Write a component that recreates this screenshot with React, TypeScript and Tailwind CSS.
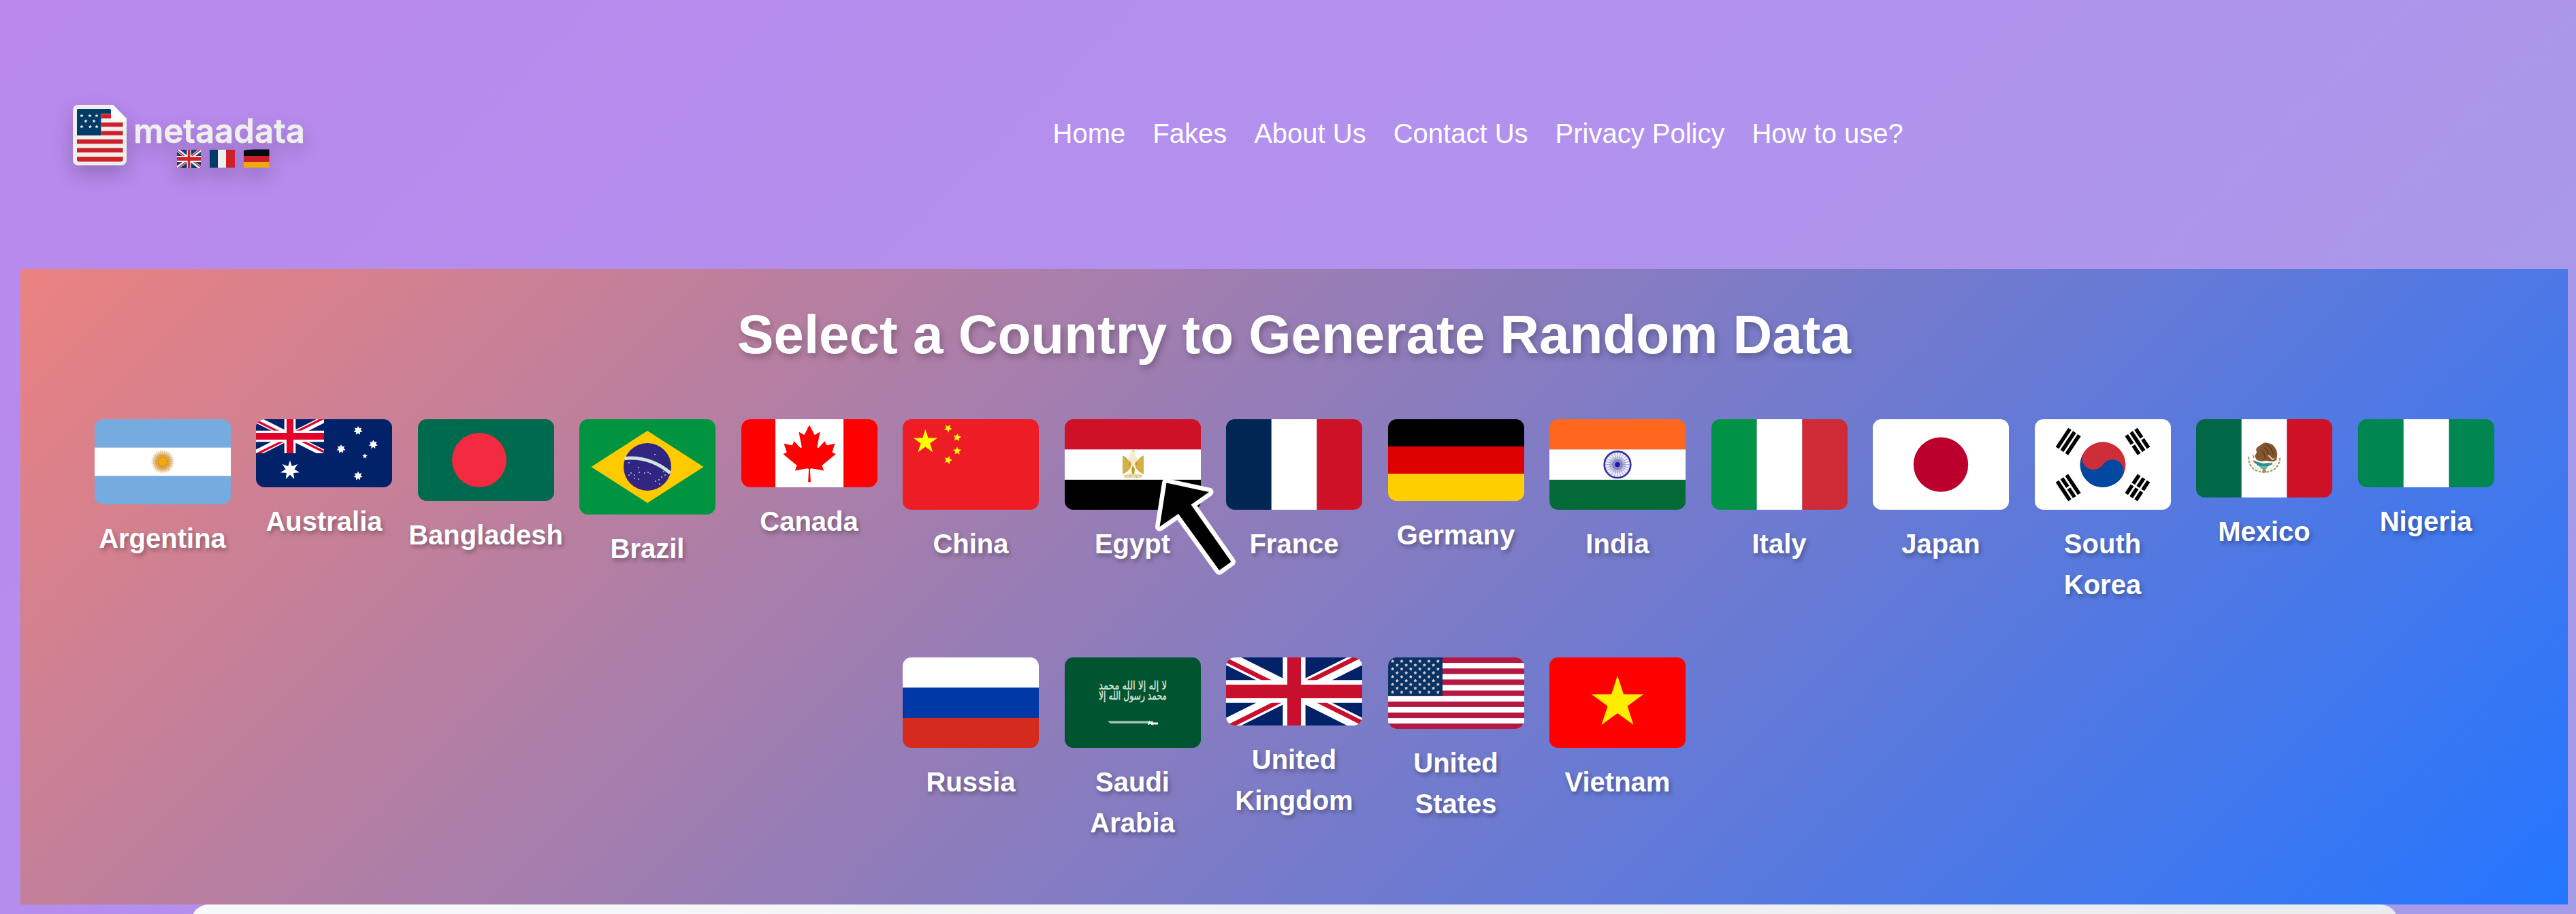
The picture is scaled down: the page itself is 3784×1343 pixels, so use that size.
import { useId, type ReactNode } from "react";

function star(cx: number, cy: number, r: number, points = 5, inner = 0.382, turn = 0) {
  const out: string[] = [];
  for (let i = 0; i < points * 2; i++) {
    const rad = i % 2 === 0 ? r : r * inner;
    const a = (Math.PI * i) / points - Math.PI / 2 + turn;
    out.push(`${(cx + rad * Math.cos(a)).toFixed(3)},${(cy + rad * Math.sin(a)).toFixed(3)}`);
  }
  return out.join(" ");
}

function Bands({ colors, h, vertical }: { colors: string[]; h: number; vertical?: boolean }) {
  const n = colors.length;
  return (
    <>
      {colors.map((c, i) =>
        vertical ? (
          <rect key={i} x={(200 / n) * i} y={0} width={200 / n + 0.2} height={h} fill={c} />
        ) : (
          <rect key={i} x={0} y={(h / n) * i} width={200} height={h / n + 0.2} fill={c} />
        ),
      )}
    </>
  );
}

function UnionJack({ blue = "#012169", red = "#c8102e" }: { blue?: string; red?: string }) {
  const id = useId();
  return (
    <g>
      <clipPath id={id}>
        <path d="M30,15h30v15zv15H0zH0V0zV0h30z" />
      </clipPath>
      <path d="M0,0v30h60V0z" fill={blue} />
      <path d="M0,0 60,30M60,0 0,30" stroke="#fff" strokeWidth="6" />
      <path d="M0,0 60,30M60,0 0,30" clipPath={`url(#${id})`} stroke={red} strokeWidth="4" />
      <path d="M30,0v30M0,15h60" stroke="#fff" strokeWidth="10" />
      <path d="M30,0v30M0,15h60" stroke={red} strokeWidth="6" />
    </g>
  );
}

const argentina = (
  <>
    <Bands h={125} colors={["#74acdf", "#ffffff", "#74acdf"]} />
    <polygon points={star(100, 62.5, 18, 32, 0.75)} fill="#e6c797" />
    <circle cx="100" cy="62.5" r="11.5" fill="#dda650" />
    <circle cx="100" cy="62.5" r="7" fill="#f0a80c" stroke="#c98a1c" strokeWidth="1" />
  </>
);

const australia = (
  <>
    <rect width="200" height="100" fill="#012169" />
    <svg width="100" height="50" viewBox="0 0 60 30">
      <UnionJack red="#e4002b" />
    </svg>
    <g fill="#fff">
      <polygon points={star(50, 75, 14.5, 7, 0.45)} />
      <polygon points={star(150, 83.3, 6.8, 7, 0.55)} />
      <polygon points={star(125, 43.7, 6.8, 7, 0.55)} />
      <polygon points={star(150, 16.7, 6.8, 7, 0.55)} />
      <polygon points={star(172.3, 37, 6.8, 7, 0.55)} />
      <polygon points={star(160, 54.2, 4, 5, 0.45)} />
    </g>
  </>
);

const brazil = (
  <>
    <rect width="200" height="140" fill="#009440" />
    <path d="M17.5 70 100 17 182.5 70 100 123z" fill="#ffcb00" />
    <circle cx="100" cy="70" r="35" fill="#302681" />
    <path d="M66.5 57.5Q104 54 133.5 79" fill="none" stroke="#cfe6dc" strokeWidth="5" />
    <g fill="#b9b6dc">
      {[
        [73, 64], [87, 71], [76, 79], [73, 82], [81, 82], [88, 78], [87, 88], [101, 78],
        [81, 87], [124, 77], [121, 85], [126, 82], [112, 91], [117, 89], [118, 95], [111, 52], [104, 80], [96, 79],
      ].map(([x, y]) => (
        <circle key={`${x}-${y}`} cx={x} cy={y} r="1.1" />
      ))}
    </g>
  </>
);

const canada = (
  <>
    <rect width="200" height="100" fill="#fff" />
    <path d="M0 0h50v100H0zM150 0h50v100h-50z" fill="#ff0000" />
    <path
      transform="translate(100 50) scale(0.0208333)"
      fill="#ff0000"
      d="m-90 2030 45-863a95 95 0 0 0-111-98l-859 151 116-320a65 65 0 0 0-20-73l-941-762 212-99a65 65 0 0 0 34-79l-186-572 542 115a65 65 0 0 0 73-38l105-247 423 454a65 65 0 0 0 111-57l-204-1052 327 189a65 65 0 0 0 91-27l332-652 332 652a65 65 0 0 0 91 27l327-189-204 1052a65 65 0 0 0 111 57l423-454 105 247a65 65 0 0 0 73 38l542-115-186 572a65 65 0 0 0 34 79l212 99-941 762a65 65 0 0 0-20 73l116 320-859-151a95 95 0 0 0-111 98l45 863z"
    />
  </>
);

const china = (
  <>
    <rect width="200" height="134" fill="#ee1c25" />
    <g fill="#ffff00" transform="scale(6.6667)">
      <polygon points={star(5, 5, 2.8)} />
      <polygon points={star(10, 2, 0.95, 5, 0.45, 0.55)} />
      <polygon points={star(12, 4, 0.95, 5, 0.45, 0.15)} />
      <polygon points={star(12, 7, 0.95, 5, 0.45)} />
      <polygon points={star(10, 9, 0.95, 5, 0.45, 0.3)} />
    </g>
  </>
);

const egypt = (
  <>
    <Bands h={133.33} colors={["#ce1126", "#ffffff", "#000000"]} />
    <path d="M97 48l3-4 4 2-1 5 3 6 4 4-2 8h-16l-2-8 5-5z" fill="#f5ecd0" />
    <path d="M85 53l5 3 5 6 3 3-1 6-5 6-7 4zM116 53l-5 3-5 6-3 3 1 6 5 6 7 4z" fill="#d3b048" />
    <path d="M96 60l1 7-3 2zM105 60l-1 7 3 2zM98 73l2-5 3 5-1 8h-3z" fill="#c39a1c" />
    <path d="M99 45l2-1 2 2-3 2z" fill="#dcc376" />
    <path d="M86 82q14-4 29 0l-4 4H90z" fill="#ead9a4" />
    <path d="M91 82l-3 4M97 81l-2 5M104 81l2 5M110 82l3 4" stroke="#d3b048" strokeWidth="1" />
  </>
);

const india = (
  <>
    <Bands h={133.33} colors={["#ff671f", "#ffffff", "#046a38"]} />
    <circle cx="100" cy="66.67" r="19.3" fill="#eeeef8" stroke="#2f2da0" strokeWidth="2.6" />
    <circle cx="100" cy="66.67" r="12" fill="#c9c8e6" />
    <circle cx="100" cy="66.67" r="8" fill="#8d8bcb" />
    {Array.from({ length: 12 }, (_, i) => (
      <path key={i} d="M100 49v35.3" stroke="#8482c8" strokeWidth="0.7" transform={`rotate(${i * 15} 100 66.67)`} />
    ))}
    <circle cx="100" cy="66.67" r="3.6" fill="#1f1c98" />
  </>
);

const japan = (
  <>
    <rect width="200" height="134" fill="#fff" />
    <circle cx="100" cy="66.67" r="40.2" fill="#bc002d" />
  </>
);

const trigramBars = "M-6-25H6M-6-22H6M-6-19H6M-6 19H6M-6 22H6M-6 25H6";
const korea = (
  <>
    <rect width="200" height="134" fill="#fff" />
    <g transform="translate(100 66.67) scale(2.7778)">
      <g transform="rotate(-56.31)">
        <path d={trigramBars} stroke="#000" strokeWidth="2" />
        <path d="M0 17v10" stroke="#fff" />
        <circle r="12" fill="#cd2e3a" />
        <path d="M0-12A6 6 0 0 0 0 0A6 6 0 0 1 0 12A12 12 0 0 1 0-12Z" fill="#0047a0" />
      </g>
      <g transform="rotate(-123.69)">
        <path d={trigramBars} stroke="#000" strokeWidth="2" />
        <path d="M0-23.5v3M0 17v3.5M0 23.5v3" stroke="#fff" />
      </g>
    </g>
  </>
);

const mexico = (
  <>
    <Bands h={115} vertical colors={["#006847", "#ffffff", "#ce1126"]} />
    <path d="M77 55q0 21 23 23q23-2 23-23" fill="none" stroke="#a3a877" strokeWidth="2.4" strokeDasharray="4 1.6" />
    <path d="M81 60q3 13 19 15q16-2 19-15" fill="none" stroke="#dddcc4" strokeWidth="1.2" strokeDasharray="3 2" />
    <path
      d="M96 37q4-4 9-2q8 1 11 7q4 6 3 12l-1 6-4 2h-5l-6-1-7 1-7-2-3-6 3-5-1-5 2-3z"
      fill="#84562f"
    />
    <path d="M103 37q8 4 11 16M99 41q8 5 9 17M96 47q5 3 6 11" fill="none" stroke="#5c3a1e" strokeWidth="1.5" />
    <path d="M106 53l6 6 3-1" fill="none" stroke="#e9dccb" strokeWidth="1.8" />
    <path d="M84 60l7 3 8 2 9-1 4 2-6 3-8 1-8-2z" fill="#2f8f86" />
    <path d="M92 69h14l-3 4h-7z" fill="#5db7c2" />
    <path d="M83 52l2 5M84 62l4 3M108 66l4-2" stroke="#c5573a" strokeWidth="1.4" />
    <path d="M98 72h4l1 6h-6z" fill="#b08a5b" />
  </>
);

const saudi = (
  <>
    <rect width="200" height="134" fill="#005430" />
    <g fill="#cfe0d7" stroke="#cfe0d7" strokeWidth="0.5" className="font-['DejaVu_Sans']">
      <text x="100" y="47" fontSize="17" textAnchor="middle" textLength="100" lengthAdjust="spacingAndGlyphs">
        لا إله إلا الله محمد
      </text>
      <text x="100" y="62" fontSize="17" textAnchor="middle" textLength="100" lengthAdjust="spacingAndGlyphs">
        محمد رسول الله إلا
      </text>
    </g>
    <path d="M63 93.5H123v3.6H67z" fill="#a9c6b7" />
    <path d="M122 95.5l3-3 1 2 3-1 1 2h7v3h-6l-3 1-2-2-3 2z" fill="#f1f6f3" />
  </>
);

const usa = (
  <>
    <rect width="200" height="105.3" fill="#fff" />
    {Array.from({ length: 7 }, (_, i) => (
      <rect key={i} y={i * 16.2} width="200" height="8.1" fill="#b31942" />
    ))}
    <rect width="80" height="56.7" fill="#0a3161" />
    {Array.from({ length: 9 }, (_, r) =>
      Array.from({ length: r % 2 === 0 ? 6 : 5 }, (_, c) => (
        <polygon
          key={`${r}-${c}`}
          points={star((r % 2 === 0 ? 6.67 : 13.33) + c * 13.33, 5.67 * (r + 1), 2.7, 5, 0.6)}
          fill="#c3ccd8"
        />
      )),
    )}
  </>
);

const vietnam = (
  <>
    <rect width="200" height="134" fill="#ff0000" />
    <polygon points={star(100, 66.67, 40)} fill="#ffed00" />
  </>
);

type Country = { name: string; h: number; art: ReactNode };

const countries: Country[] = [
  { name: "Argentina", h: 125, art: argentina },
  { name: "Australia", h: 100, art: australia },
  {
    name: "Bangladesh",
    h: 120,
    art: (
      <>
        <rect width="200" height="120" fill="#006a4e" />
        <circle cx="90" cy="60" r="40" fill="#f42a41" />
      </>
    ),
  },
  { name: "Brazil", h: 140, art: brazil },
  { name: "Canada", h: 100, art: canada },
  { name: "China", h: 133.33, art: china },
  { name: "Egypt", h: 133.33, art: egypt },
  { name: "France", h: 133.33, art: <Bands h={133.33} vertical colors={["#002654", "#ffffff", "#ce1126"]} /> },
  { name: "Germany", h: 120, art: <Bands h={120} colors={["#000000", "#dd0000", "#ffce00"]} /> },
  { name: "India", h: 133.33, art: india },
  { name: "Italy", h: 133.33, art: <Bands h={133.33} vertical colors={["#009246", "#ffffff", "#ce2b37"]} /> },
  { name: "Japan", h: 133.33, art: japan },
  { name: "South Korea", h: 133.33, art: korea },
  { name: "Mexico", h: 115, art: mexico },
  { name: "Nigeria", h: 100, art: <Bands h={100} vertical colors={["#008751", "#ffffff", "#008751"]} /> },
  { name: "Russia", h: 133.33, art: <Bands h={133.33} colors={["#ffffff", "#0039a6", "#d52b1e"]} /> },
  { name: "Saudi Arabia", h: 133.33, art: saudi },
  {
    name: "United Kingdom",
    h: 100,
    art: (
      <svg width="200" height="100" viewBox="0 0 60 30">
        <UnionJack />
      </svg>
    ),
  },
  { name: "United States", h: 105.3, art: usa },
  { name: "Vietnam", h: 133.33, art: vietnam },
];

const links = ["Home", "Fakes", "About Us", "Contact Us", "Privacy Policy", "How to use?"];

function Logo() {
  return (
    <svg
      width="345"
      height="96"
      viewBox="105 152 345 96"
      className="shrink-0 overflow-visible [filter:drop-shadow(0_12px_14px_rgba(0,0,0,0.2))]"
    >
      <path d="M115 154H166L186 174V235a8 8 0 0 1-8 8H115a8 8 0 0 1-8-8V162a8 8 0 0 1 8-8z" fill="#efefed" />
      <path d="M166 154 186 175V178H167a4 4 0 0 1-4-4V154z" fill="#fbfbfa" />
      <path d="M113 162a2 2 0 0 1 2-2H161a2 2 0 0 1 2 2V167H148.5V199H113z" fill="#023a68" />
      <path
        d="M148.5 167.5H163v6.5H148.5zM148.5 180H180.5v6.3H148.5zM148.5 192.5H180.5v6.3H148.5zM113 204.8H180.5v6.5H113zM113 217.5H180.5v6.5H113zM113 230.5H180.5V234.5a3 3 0 0 1-3 3H116a3 3 0 0 1-3-3z"
        fill="#cf2029"
      />
      <g fill="#f4f5f6">
        {[[120, 170], [132, 170], [142, 170], [126, 178], [138, 178], [120, 186], [132.5, 186], [142, 186]].map(([x, y]) => (
          <polygon key={`${x}-${y}`} points={star(x, y, 2.7, 5, 0.5)} />
        ))}
      </g>
      <text
        x="196"
        y="210"
        fontSize="49"
        textLength="252"
        lengthAdjust="spacingAndGlyphs"
        fill="#efefed"
        stroke="#efefed"
        strokeWidth="0.6"
        className="font-['Inter'] font-semibold"
      >
        metaadata
      </text>
      <svg x="260" y="220" width="35" height="27" viewBox="0 0 60 30" preserveAspectRatio="none">
        <UnionJack blue="#123c72" red="#d0212c" />
      </svg>
      <path d="M308 220h12v26.5h-12z" fill="#023a68" />
      <path d="M320 220h12v26.5h-12z" fill="#efefed" />
      <path d="M332 220h13v26.5h-13z" fill="#cf2029" />
      <path d="M358 221q8-2 20-1.5h17.5V229H358z" fill="#060b0e" />
      <path d="M358 229h37.5v9H358z" fill="#cf2029" />
      <path d="M358 238h37.5v8.5H358z" fill="#f2a90f" />
    </svg>
  );
}

export default function App() {
  return (
    <div className="relative flex h-[1343px] w-[3784px] flex-col overflow-hidden bg-[linear-gradient(135deg,#b888ec_0%,#b391ee_45%,#a59ce8_100%)] font-['Liberation_Sans',sans-serif] text-white">
      <header className="flex h-[395px] shrink-0 items-start pl-[105px] pt-[152px]">
        <Logo />
        <nav className="ml-[1096.5px] mt-[14px] flex gap-10 whitespace-nowrap text-[40px] leading-[60px]">
          {links.map((l) => (
            <a key={l} href="#">
              {l}
            </a>
          ))}
        </nav>
      </header>

      <main className="ml-[30px] flex h-[934px] w-[3742px] shrink-0 flex-col items-center bg-[linear-gradient(135deg,#eb8280_0%,#2476ff_100%)] pt-[49px]">
        <h1 className="mb-[76px] text-[80px] font-bold leading-[96px] [text-shadow:2.5px_5px_10px_rgba(0,0,0,0.25)]">
          Select a Country to Generate Random Data
        </h1>
        <div className="flex w-[3642px] flex-wrap items-start justify-center gap-x-[37.5px] gap-y-[76.7px]">
          {countries.map((c) => (
            <a key={c.name} href="#" className="flex w-[200px] flex-col items-center">
              <svg width="200" height={c.h} viewBox={`0 0 200 ${c.h}`} className="block rounded-[12.5px]">
                {c.art}
              </svg>
              <span className="mt-5 text-center text-[40px] font-bold leading-[60px] [text-shadow:2.5px_4px_6px_rgba(0,0,0,0.3)]">
                {c.name}
              </span>
            </a>
          ))}
        </div>
      </main>

      <section className="mx-auto h-[60px] w-[3241px] shrink-0 translate-x-[9px] rounded-t-[25px] bg-[linear-gradient(90deg,#f8f9fa,#e9ecef)]" />

      <svg
        width="130"
        height="160"
        viewBox="1695 695 130 160"
        className="pointer-events-none absolute left-[1695px] top-[695px]"
      >
        <path
          d="M1713.5 709.5 1776 723 1749.5 741.5 1808.5 825.5 1791 838 1731 755 1703.5 774z"
          fill="#000"
          stroke="#fff"
          strokeWidth="13"
          strokeLinejoin="round"
          paintOrder="stroke"
        />
      </svg>
    </div>
  );
}
